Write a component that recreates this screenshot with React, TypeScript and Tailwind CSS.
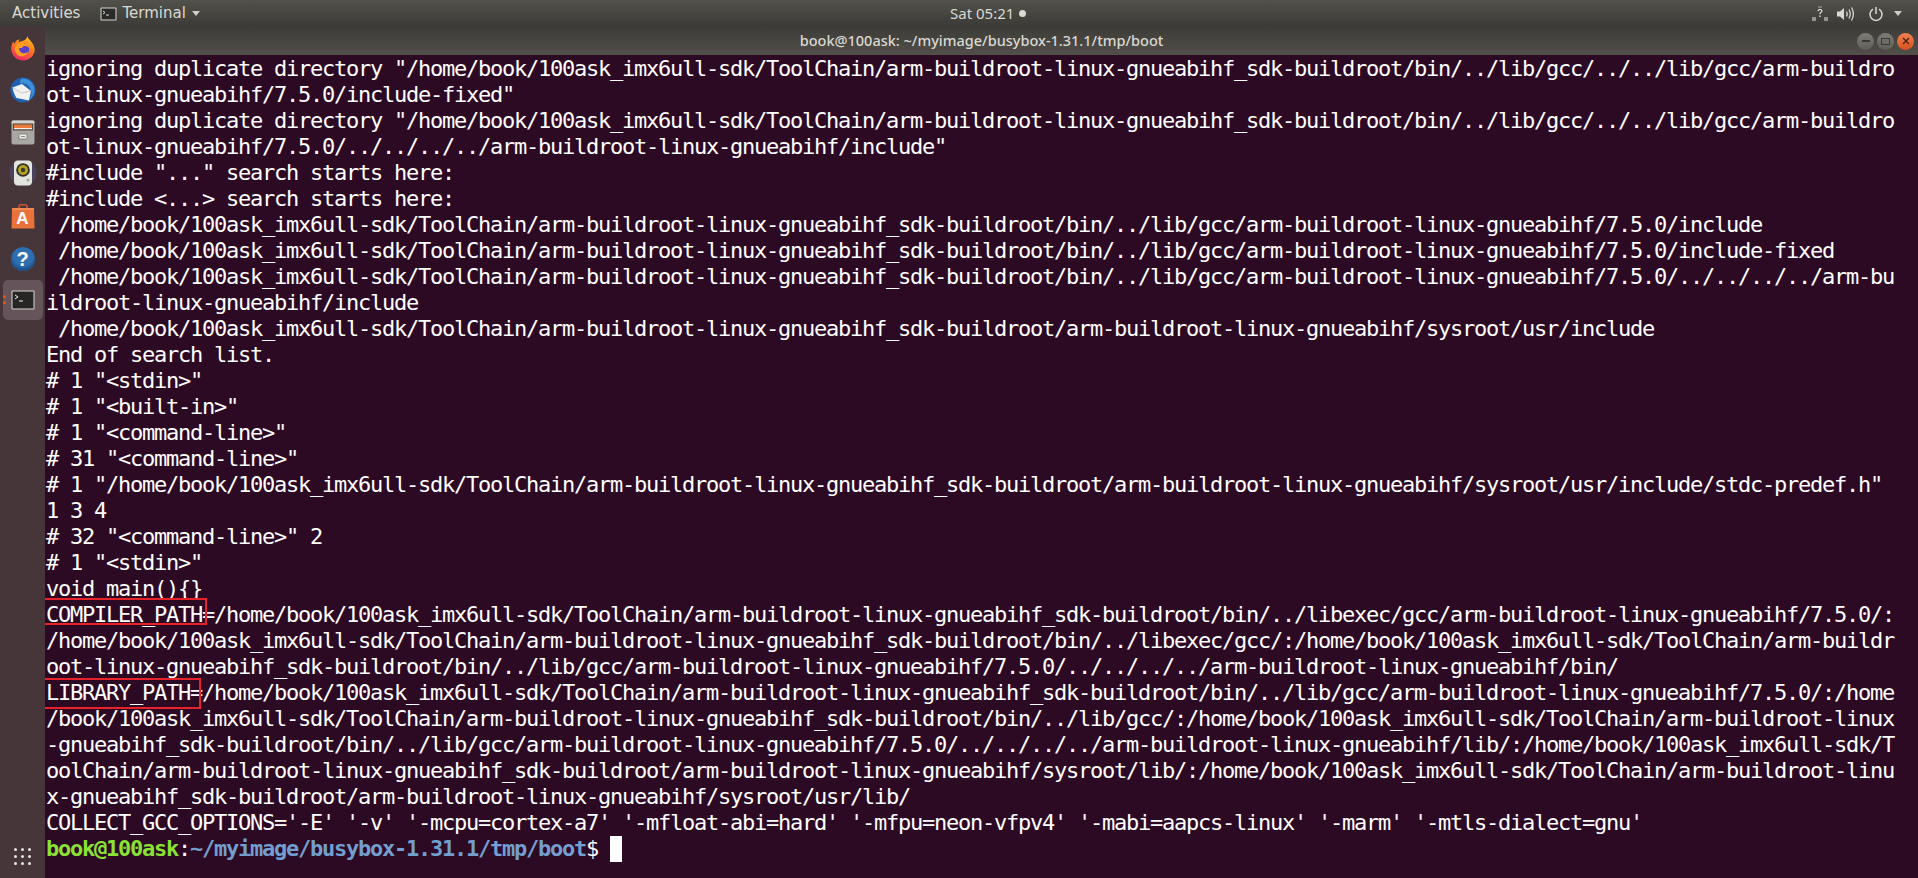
const SDK = '/home/book/100ask_imx6ull-sdk/ToolChain/arm-buildroot-linux-gnueabihf_sdk-buildroot';

const lines = [
  `ignoring duplicate directory "${SDK}/bin/../lib/gcc/../../lib/gcc/arm-buildro`,
  'ot-linux-gnueabihf/7.5.0/include-fixed"',
  `ignoring duplicate directory "${SDK}/bin/../lib/gcc/../../lib/gcc/arm-buildro`,
  'ot-linux-gnueabihf/7.5.0/../../../../arm-buildroot-linux-gnueabihf/include"',
  '#include "..." search starts here:',
  '#include <...> search starts here:',
  ` ${SDK}/bin/../lib/gcc/arm-buildroot-linux-gnueabihf/7.5.0/include`,
  ` ${SDK}/bin/../lib/gcc/arm-buildroot-linux-gnueabihf/7.5.0/include-fixed`,
  ` ${SDK}/bin/../lib/gcc/arm-buildroot-linux-gnueabihf/7.5.0/../../../../arm-bu`,
  'ildroot-linux-gnueabihf/include',
  ` ${SDK}/arm-buildroot-linux-gnueabihf/sysroot/usr/include`,
  'End of search list.',
  '# 1 "<stdin>"',
  '# 1 "<built-in>"',
  '# 1 "<command-line>"',
  '# 31 "<command-line>"',
  `# 1 "${SDK}/arm-buildroot-linux-gnueabihf/sysroot/usr/include/stdc-predef.h"`,
  '1 3 4',
  '# 32 "<command-line>" 2',
  '# 1 "<stdin>"',
  'void main(){}',
];

const tail = [
  `${SDK}/bin/../libexec/gcc/:/home/book/100ask_imx6ull-sdk/ToolChain/arm-buildr`,
  'oot-linux-gnueabihf_sdk-buildroot/bin/../lib/gcc/arm-buildroot-linux-gnueabihf/7.5.0/../../../../arm-buildroot-linux-gnueabihf/bin/',
];

const tail2 = [
  '/book/100ask_imx6ull-sdk/ToolChain/arm-buildroot-linux-gnueabihf_sdk-buildroot/bin/../lib/gcc/:/home/book/100ask_imx6ull-sdk/ToolChain/arm-buildroot-linux',
  '-gnueabihf_sdk-buildroot/bin/../lib/gcc/arm-buildroot-linux-gnueabihf/7.5.0/../../../../arm-buildroot-linux-gnueabihf/lib/:/home/book/100ask_imx6ull-sdk/T',
  'oolChain/arm-buildroot-linux-gnueabihf_sdk-buildroot/arm-buildroot-linux-gnueabihf/sysroot/lib/:/home/book/100ask_imx6ull-sdk/ToolChain/arm-buildroot-linu',
  'x-gnueabihf_sdk-buildroot/arm-buildroot-linux-gnueabihf/sysroot/usr/lib/',
  "COLLECT_GCC_OPTIONS='-E' '-v' '-mcpu=cortex-a7' '-mfloat-abi=hard' '-mfpu=neon-vfpv4' '-mabi=aapcs-linux' '-marm' '-mtls-dialect=gnu'",
];

function Line({ children }: { children: React.ReactNode }) {
  return <div className="h-[26px] whitespace-pre leading-[26px]">{children}</div>;
}

function Firefox() {
  return (
    <svg width="26" height="26" viewBox="0 0 26 26">
      <defs>
        <linearGradient id="ffBody" x1="0.7" y1="0" x2="0.3" y2="1">
          <stop offset="0" stopColor="#ffc21f" />
          <stop offset="0.45" stopColor="#ff7a1f" />
          <stop offset="1" stopColor="#f0246a" />
        </linearGradient>
      </defs>
      <path d="M17.5 1c.4 2.6 2 3.4 3.6 5.4 2.6 3.2 3.6 6 3.6 8.2C24.7 20.9 19.500 25.500 13 25.500 6.400 25.500 1.200 20.300 1.200 13.800c0-2.500.6-5.300 2-7.300.2 1 .7 1.800 1.300 2.200C5.300 6 7.400 4.500 9.800 4.200 8.900 5.200 8.600 6.100 8.800 7c2.800-.8 7.900-1.400 8.700-6z" fill="url(#ffBody)" />
      <circle cx="13.500" cy="14.500" r="5.800" fill="#5c3fc9" />
      <path d="M5 12c1.800-3 5.500-4.700 9.500-3.600 2.500.7 4.600 2.800 5.200 5.200-1.600-2.200-4.100-3-6.400-2.200-.9.300-1.300 1-1.100 1.700H9.300c-.5 1.600.3 3.700 2.300 4.700 2.700 1.300 5.600.3 7-1.700-.7 3.200-4 5.700-7.500 5.200C6.700 20.700 3.700 16 5 12z" fill="#ff9d1e" />
    </svg>
  );
}

function Thunderbird() {
  return (
    <svg width="26" height="26" viewBox="0 0 26 26">
      <circle cx="13" cy="13" r="12.500" fill="#1f62b3" />
      <path d="M12 1.500c6.500-.5 12.500 4.500 12.500 11.500 0 4-2 7.500-5 9.700 2-3 2.800-7 1.200-10.500C19 8 15.500 5.500 10 6.500 10 4.500 10.500 2.700 12 1.500z" fill="#3d8fd8" />
      <path d="M2.500 10.500 12 7l9 7-2 9.500-12.500-2.500C4.500 18 3 14 2.500 10.500z" fill="#f1f1f1" />
      <path d="M2.500 10.500 11.500 16 21 14" fill="none" stroke="#bdbdbd" strokeWidth="0.800" />
    </svg>
  );
}

function Files() {
  return (
    <svg width="24" height="25" viewBox="0 0 24 25">
      <rect x="0.500" y="0.500" width="23" height="24" rx="2" fill="#a9a7a3" />
      <rect x="0.500" y="0.500" width="23" height="3" rx="1.500" fill="#d6d4d0" />
      <rect x="2" y="3.500" width="20" height="7" fill="#5a4a43" />
      <rect x="3" y="4.500" width="18" height="3.500" fill="#ea7a3c" />
      <rect x="3" y="8" width="18" height="1.200" fill="#f3f0ea" />
      <rect x="8" y="14" width="8" height="5" rx="0.500" fill="#ececea" stroke="#6f6e6b" strokeWidth="0.800" />
      <rect x="10" y="16" width="4" height="1" fill="#8b8a86" />
    </svg>
  );
}

function Rhythmbox() {
  return (
    <svg width="28" height="28" viewBox="0 0 28 28">
      <circle cx="14" cy="14" r="13.500" fill="#4c4a72" opacity="0.600" />
      <rect x="5" y="1.500" width="18" height="25" rx="4" fill="#e4e4de" />
      <circle cx="14" cy="11" r="6.800" fill="#2f2f2d" />
      <circle cx="14" cy="11" r="5" fill="#b7a21f" />
      <circle cx="14" cy="11" r="2.200" fill="#3a3a36" />
      <circle cx="19" cy="21" r="1.500" fill="#a7a7a2" />
    </svg>
  );
}

function Software() {
  return (
    <div className="relative flex h-[25px] w-[24px] items-end justify-center">
      <svg className="absolute left-0 top-0" width="24" height="25" viewBox="0 0 24 25">
        <path d="M8 4V2.500C8 1.500 9 .800 10 .800h4c1 0 2 .7 2 1.700V4" fill="none" stroke="#c9552a" strokeWidth="1.600" />
        <path d="M1 4h22l.5 20.500H.500z" fill="#e9723a" />
        <path d="M1 4h22v2H1z" fill="#f08a54" />
      </svg>
      <span className="relative font-['Liberation_Sans',sans-serif] text-[17px] font-bold leading-[20px] text-white">A</span>
    </div>
  );
}

function Help() {
  return (
    <div className="flex h-[24px] w-[24px] items-center justify-center rounded-full bg-[#2f6fb0] shadow-[inset_0_-3px_3px_#1d4d85]">
      <span className="font-['Liberation_Sans',sans-serif] text-[20px] font-bold leading-none text-white">?</span>
    </div>
  );
}

function TerminalIcon() {
  return (
    <svg width="24" height="20" viewBox="0 0 24 20">
      <rect x="0.500" y="0.500" width="23" height="19" rx="1" fill="#d6d6d2" />
      <rect x="1.500" y="1.500" width="21" height="17" fill="#262624" />
      <path d="M4 5l3 2-3 2" fill="none" stroke="#f2f2f2" strokeWidth="1" />
      <path d="M8 11h4" stroke="#f2f2f2" strokeWidth="1" />
    </svg>
  );
}

function Dock() {
  return (
    <aside className="flex w-[45px] shrink-0 flex-col items-center bg-[#463539] pt-[8px]">
      <Firefox />
      <div className="mt-[16px]"><Thunderbird /></div>
      <div className="mt-[17px]"><Files /></div>
      <div className="mt-[14px]"><Rhythmbox /></div>
      <div className="mt-[17px]"><Software /></div>
      <div className="mt-[18px]"><Help /></div>
      <div className="relative mt-[9px] flex h-[40px] w-[40px] items-center justify-center rounded-[5px] bg-[#65555a]">
        <TerminalIcon />
        <span className="absolute left-[0px] top-[15px] h-[3px] w-[3px] rounded-full bg-[#e9541f]" />
        <span className="absolute left-[0px] top-[21px] h-[3px] w-[3px] rounded-full bg-[#e9541f]" />
      </div>
      <div className="mb-[13px] mt-auto grid grid-cols-3 gap-[4px]">
        {Array.from({ length: 9 }).map((_, i) => (
          <span key={i} className="h-[3px] w-[3px] rounded-full bg-[#e6e6e6]" />
        ))}
      </div>
    </aside>
  );
}

function TopBar() {
  return (
    <header className="flex h-[27px] shrink-0 items-center whitespace-nowrap bg-gradient-to-b from-[#53514b] to-[#3b3a36] font-['DejaVu_Sans',sans-serif] text-[15px] text-[#d9d9d4]">
      <div className="flex w-[950px] items-center pl-[12px]">
        <span>Activities</span>
        <svg className="ml-[20px]" width="17" height="14" viewBox="0 0 17 14">
          <rect x="0.500" y="0.500" width="16" height="13" rx="1" fill="#d6d6d2" />
          <rect x="1.500" y="1.500" width="14" height="11" fill="#2a2a28" />
          <path d="M3 4l2 1.500L3 7" fill="none" stroke="#eee" strokeWidth="0.900" />
          <path d="M6 8h3" stroke="#eee" strokeWidth="0.900" />
        </svg>
        <span className="ml-[5px]">Terminal</span>
        <span className="ml-[6px] h-0 w-0 border-x-[4.500px] border-t-[5px] border-x-transparent border-t-[#cfcfca]" />
      </div>
      <div className="flex items-center font-['Noto_Sans',sans-serif]">
        <span>Sat 05:21</span>
        <span className="ml-[5px] h-[7px] w-[7px] rounded-full bg-[#d9d9d4]" />
      </div>
      <div className="ml-auto flex items-center pr-[16px]">
        <svg width="16" height="16" viewBox="0 0 16 16" fill="#a9a9a4">
          <rect x="0" y="11" width="4" height="4" opacity="0.800" />
          <rect x="12" y="11" width="4" height="4" opacity="0.800" />
          <rect x="6" y="0" width="4" height="2" opacity="0.500" />
          <path d="M5.500 5c.3-1.400 1.300-2 2.600-2 1.400 0 2.400.8 2.400 2 0 1.600-2 1.600-2 3.300H7.300c0-2.200 1.900-2.200 1.900-3.300 0-.5-.5-.9-1.100-.9-.6 0-1.100.4-1.300 1.100zM7.300 9.500h1.300V11H7.300z" fill="#e4e4e0" />
        </svg>
        <svg className="ml-[9px]" width="18" height="16" viewBox="0 0 18 16" fill="none">
          <path d="M0 5.500h3L7 2v12L3 10.500H0z" fill="#d9d9d4" />
          <path d="M9.500 5.500c.8 1.500.8 3.500 0 5M12 3.500c1.500 2.700 1.500 6.300 0 9M14.500 1.500c2.300 4 2.300 9 0 13" stroke="#d9d9d4" strokeWidth="1.300" />
        </svg>
        <svg className="ml-[13px]" width="16" height="16" viewBox="0 0 16 16" fill="none" stroke="#d9d9d4" strokeWidth="1.500">
          <path d="M5 3.200a6 6 0 1 0 6 0" />
          <path d="M8 1v7" />
        </svg>
        <span className="ml-[10px] h-0 w-0 border-x-[4.500px] border-t-[5px] border-x-transparent border-t-[#cfcfca]" />
      </div>
    </header>
  );
}

function WindowButton({ children, close }: { children: React.ReactNode; close?: boolean }) {
  return (
    <span className={close
      ? 'flex h-[17px] w-[17px] items-center justify-center rounded-full bg-gradient-to-b from-[#f0804e] to-[#d9501e]'
      : 'flex h-[17px] w-[17px] items-center justify-center rounded-full bg-gradient-to-b from-[#7d7c76] to-[#5f5e59]'}>
      {children}
    </span>
  );
}

function TitleBar() {
  return (
    <div className="grid h-[28px] shrink-0 grid-cols-[1fr_auto_1fr] items-center bg-gradient-to-b from-[#3d3c38] to-[#524f49] px-[4px]">
      <div />
      <span className="font-['Noto_Sans',sans-serif] text-[14.500px] font-medium text-[#dad8d2]">book@100ask: ~/myimage/busybox-1.31.1/tmp/boot</span>
      <div className="flex justify-end gap-[3px]">
        <WindowButton>
          <span className="h-[1.500px] w-[8px] bg-[#3a3a36]" />
        </WindowButton>
        <WindowButton>
          <span className="h-[7px] w-[9px] border border-[#3a3a36]" />
        </WindowButton>
        <WindowButton close>
          <svg width="8" height="8" viewBox="0 0 8 8" stroke="#4a2010" strokeWidth="1.300">
            <path d="M1 1l6 6M7 1L1 7" />
          </svg>
        </WindowButton>
      </div>
    </div>
  );
}

export default function App() {
  return (
    <div className="flex h-screen w-full flex-col overflow-hidden bg-[#2d0a23]">
      <TopBar />
      <div className="flex min-h-0 flex-1">
        <Dock />
        <main className="flex min-w-0 flex-1 flex-col">
          <TitleBar />
          <section className="flex-1 overflow-hidden bg-[#2d0a23] pl-[1px] pt-[1px] font-['DejaVu_Sans_Mono',monospace] text-[22px] tracking-[-1.245px] text-white">
            {lines.map((line, i) => <Line key={i}>{line}</Line>)}
            <Line>
              <span className="relative">
                COMPILER_PATH
                <span className="absolute -left-[4px] -top-[4px] h-[27px] w-[165px] border-2 border-[#e8222b]" />
              </span>
              =/home/book/100ask_imx6ull-sdk/ToolChain/arm-buildroot-linux-gnueabihf_sdk-buildroot/bin/../libexec/gcc/arm-buildroot-linux-gnueabihf/7.5.0/:
            </Line>
            {tail.map((line, i) => <Line key={i}>{line}</Line>)}
            <Line>
              <span className="relative">
                LIBRARY_PATH=
                <span className="absolute -left-[4px] -top-[2px] h-[31px] w-[159px] border-2 border-[#e8222b]" />
              </span>
              /home/book/100ask_imx6ull-sdk/ToolChain/arm-buildroot-linux-gnueabihf_sdk-buildroot/bin/../lib/gcc/arm-buildroot-linux-gnueabihf/7.5.0/:/home
            </Line>
            {tail2.map((line, i) => <Line key={i}>{line}</Line>)}
            <Line>
              <b className="text-[#8ae234]">book@100ask</b>:<b className="text-[#729fcf]">~/myimage/busybox-1.31.1/tmp/boot</b>$ <span className="inline-block h-[26px] w-[12px] bg-white align-top" />
            </Line>
          </section>
        </main>
      </div>
    </div>
  );
}
